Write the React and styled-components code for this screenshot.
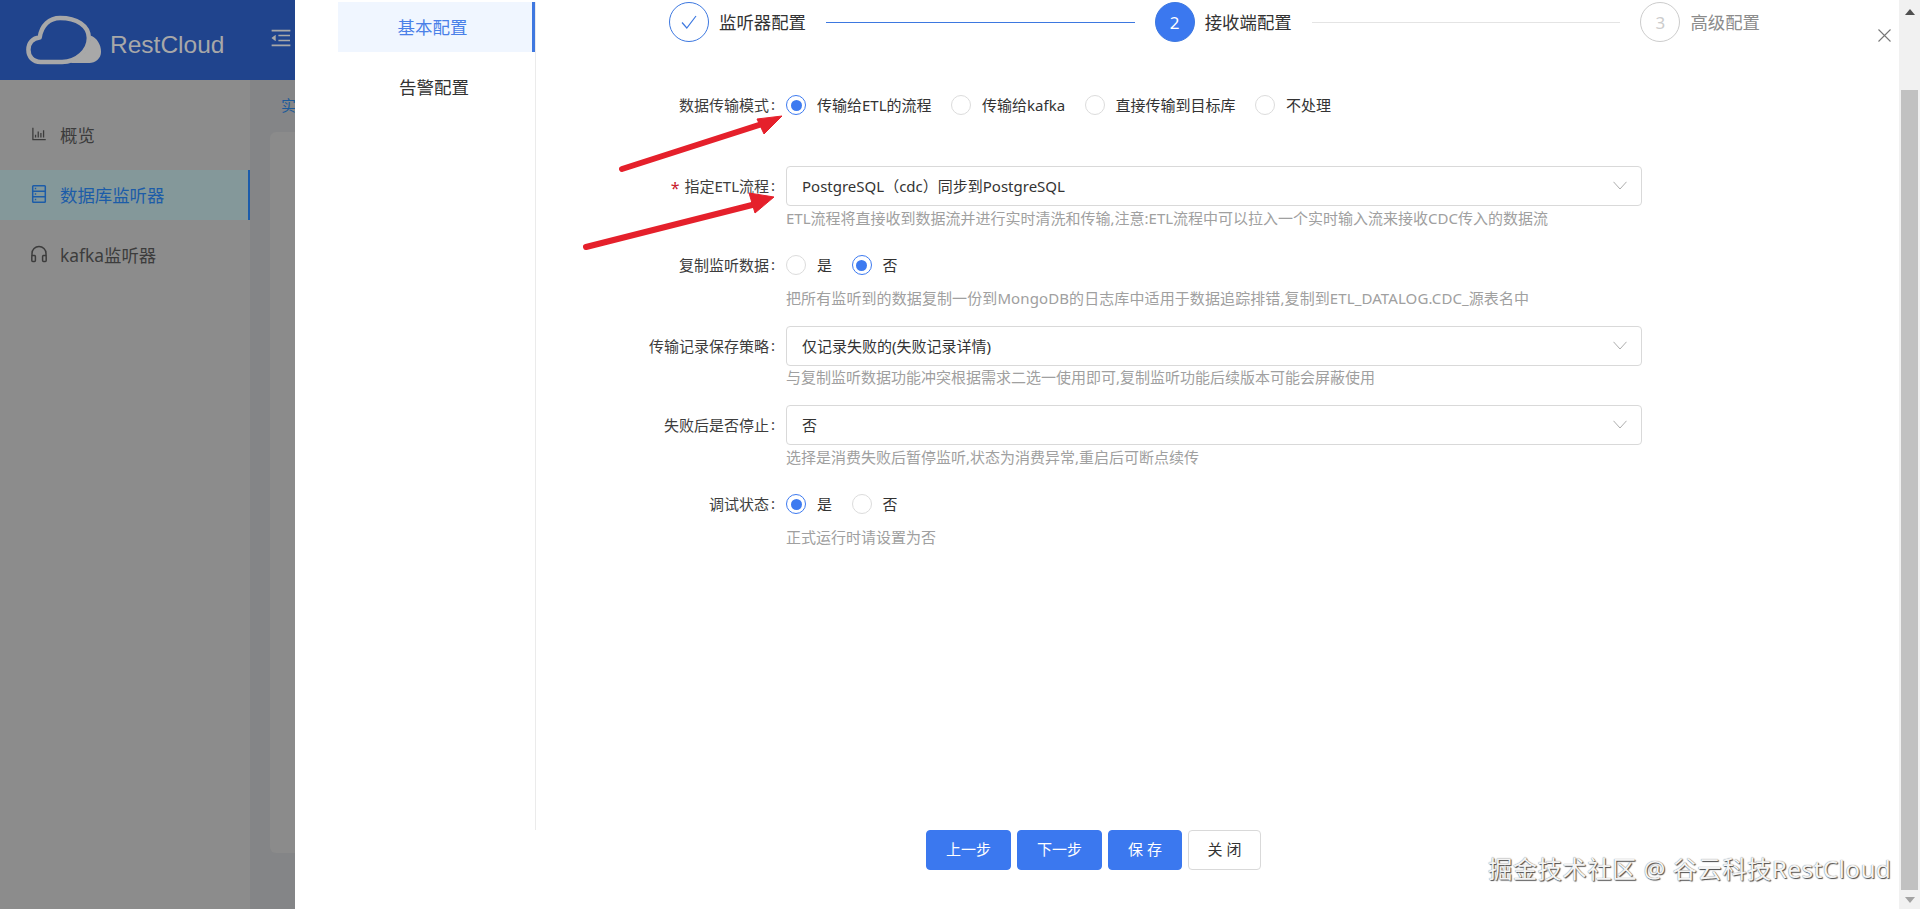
import styled, { createGlobalStyle } from "styled-components";
import { AiOutlineBarChart, AiOutlineMenuFold } from "react-icons/ai";

const GlobalStyle = createGlobalStyle`
  html, body {
    margin: 0;
    padding: 0;
    overflow: hidden;
    font-family: "Noto Sans", "Noto Sans CJK SC", sans-serif;
    color: #333;
  }
  * {
    box-sizing: border-box;
  }
`;

const Page = styled.div`
  position: relative;
  width: 1920px;
  height: 909px;
  overflow: hidden;
  background: #848587;
`;

// dimmed page behind the modal
const Header = styled.div`
  display: flex;
  align-items: center;
  height: 80px;
  padding-left: 25px;
  background: #20448d;
  color: #a8a8a8;
`;
const Brand = styled.span`
  margin-left: 7px;
  font-family: "Liberation Sans", Arial, sans-serif;
  font-size: 24.5px;
  line-height: 1;
  padding-top: 11px;
  width: 159px;
`;
const Toggle = styled.span`
  display: flex;
  margin-top: -4px;
  font-size: 24px;
  color: #a8a8a8;
`;
const Layout = styled.div`
  display: flex;
  height: 829px;
`;
const Sidebar = styled.div`
  display: flex;
  flex-direction: column;
  gap: 10px;
  width: 250px;
  padding-top: 30px;
  background: #8c8c8c;
`;
const SideItem = styled.div`
  display: flex;
  align-items: center;
  gap: 12px;
  height: 50px;
  padding: 0 0 2px 30px;
  font-size: 17.4px;
  color: ${(p) => (p.$active ? "#1c5ca8" : "#3c3c3c")};
  background: ${(p) => (p.$active ? "#84989a" : "transparent")};
  border-right: ${(p) => (p.$active ? "2px solid #1a5cab" : "none")};
  svg {
    flex: none;
    width: 18px;
    height: 18px;
  }
`;
const Content = styled.div`
  flex: 1;
  padding: 15px 20px 0;
`;
const Crumb = styled.div`
  height: 37px;
  padding-left: 11px;
  font-size: 15px;
  line-height: 20px;
  color: #1d5a9a;
`;
const PanelCard = styled.div`
  height: 721px;
  border-radius: 6px;
  background: #8b8b8b;
`;

// modal
const Overlay = styled.div`
  position: absolute;
  inset: 0;
  display: flex;
  padding-left: 295px;
`;
const Modal = styled.div`
  position: relative;
  flex: 1;
  display: flex;
  flex-direction: column;
  padding-top: 2px;
  background: #fff;
`;
const ModalBody = styled.div`
  display: flex;
  height: 828px;
`;
const Tabs = styled.div`
  display: flex;
  flex-direction: column;
  gap: 10px;
  flex: none;
  width: 198px;
  margin-left: 43px;
  border-right: 1px solid #ebebeb;
`;
const Tab = styled.div`
  display: flex;
  align-items: center;
  justify-content: center;
  width: 197px;
  height: 50px;
  padding: 0 5px 2px 0;
  font-size: 17.5px;
  color: ${(p) => (p.$active ? "#4a80e8" : "#333")};
  background: ${(p) => (p.$active ? "#f0f6ff" : "transparent")};
  border-right: ${(p) => (p.$active ? "3px solid #3f78e0" : "none")};
`;
const Main = styled.div`
  flex: 1;
`;
const Stepper = styled.div`
  display: flex;
  align-items: center;
  width: 1091px;
  margin: 0 0 43px 133px;
`;
const StepCircle = styled.span`
  display: flex;
  align-items: center;
  justify-content: center;
  flex: none;
  width: 40px;
  height: 40px;
  border-radius: 50%;
  font-size: 17px;
  color: ${(p) => (p.$state === "active" ? "#fff" : p.$state === "done" ? "#3d78e0" : "#ccc")};
  background: ${(p) => (p.$state === "active" ? "#3b78ef" : "#fff")};
  border: 1px solid ${(p) => (p.$state === "wait" ? "#ccc" : "#3d78e0")};
`;
const StepTitle = styled.span`
  flex: none;
  margin-left: 10px;
  padding-bottom: 2px;
  font-size: 17.4px;
  white-space: nowrap;
  color: ${(p) => (p.$wait ? "#8c8c8c" : "#333")};
`;
const StepLine = styled.span`
  flex: 1;
  height: 1px;
  margin: 0 20px;
  background: ${(p) => (p.$done ? "#3d78e0" : "#e4e4e4")};
`;
const FormRow = styled.div`
  display: grid;
  grid-template-columns: 240px 856px;
  column-gap: 10px;
  align-items: center;
  margin-bottom: ${(p) => p.$after}px;
`;
const Label = styled.label`
  display: flex;
  justify-content: flex-end;
  align-items: center;
  height: 40px;
  padding-bottom: 2px;
  font-size: 15px;
  color: #3d3d3d;
  &::after {
    content: ":";
    margin-left: 2px;
    width: 5px;
  }
`;
const Star = styled.span`
  margin: 5px 5px 0 0;
  font-size: 16px;
  line-height: 1;
  color: #c8202c;
`;
const RadioGroup = styled.div`
  display: flex;
  align-items: center;
  gap: 19.5px;
  height: 40px;
`;
const RadioItem = styled.span`
  display: flex;
  align-items: center;
  gap: 11px;
  font-size: 15px;
  color: #333;
`;
const RadioText = styled.span`
  padding-bottom: 2px;
`;
const RadioDot = styled.span`
  display: flex;
  align-items: center;
  justify-content: center;
  flex: none;
  width: 20px;
  height: 20px;
  border-radius: 50%;
  border: 1px solid ${(p) => (p.$checked ? "#3d7af0" : "#dcdcdc")};
  &::after {
    content: "";
    display: ${(p) => (p.$checked ? "block" : "none")};
    width: 11px;
    height: 11px;
    border-radius: 50%;
    background: #3d7af0;
  }
`;
const SelectBox = styled.div`
  display: flex;
  align-items: center;
  justify-content: space-between;
  height: 40px;
  padding: 0 14px 2px 15px;
  border: 1px solid #d9d9d9;
  border-radius: 4px;
  font-size: 15px;
  color: #333;
`;
const Hint = styled.div`
  grid-column: 2;
  height: 24px;
  margin-top: ${(p) => p.$top}px;
  font-size: 15px;
  line-height: 22px;
  letter-spacing: ${(p) => p.$spread || 0}px;
  white-space: nowrap;
  color: #a0a0a0;
`;
const Footer = styled.div`
  display: flex;
  gap: 6px;
  padding-left: 631px;
`;
const Button = styled.button`
  width: ${(p) => p.$width}px;
  height: 40px;
  padding: 0 0 3px;
  border-radius: 4px;
  font-family: inherit;
  font-size: 15px;
  color: ${(p) => (p.$primary ? "#fff" : "#333")};
  background: ${(p) => (p.$primary ? "#3b78ef" : "#fff")};
  border: 1px solid ${(p) => (p.$primary ? "#3b78ef" : "#d9d9d9")};
`;
const CloseIcon = styled.svg`
  position: absolute;
  top: 29px;
  right: 8px;
  width: 13px;
  height: 13px;
`;

// page scrollbar of the modal wrapper
const ScrollTrack = styled.div`
  display: flex;
  flex-direction: column;
  align-items: center;
  flex: none;
  width: 21px;
  padding-top: 9px;
  background: #f1f1f1;
`;
const ScrollArrow = styled.span`
  width: 0;
  height: 0;
  border-left: 5px solid transparent;
  border-right: 5px solid transparent;
  border-bottom: ${(p) => (p.$down ? "none" : "6px solid #505050")};
  border-top: ${(p) => (p.$down ? "6px solid #a3a3a3" : "none")};
`;
const ScrollThumb = styled.span`
  width: 17px;
  height: 800px;
  margin: 75px 0 7px;
  background: #c1c1c1;
`;

const Arrows = styled.svg`
  position: absolute;
  left: 570px;
  top: 100px;
  width: 220px;
  height: 160px;
`;
const Watermark = styled.div`
  position: absolute;
  left: 1488px;
  top: 852px;
  font-size: 24.4px;
  line-height: 34px;
  letter-spacing: 0.4px;
  white-space: nowrap;
  color: #f4f4f4;
  text-shadow: 1px 1px 1px #4a4a4a, 0 0 1px #6a6a6a;
`;

const Logo = () => (
  <svg width="78" height="52" viewBox="24 14 80 52" fill="none">
    <path
      d="M40 62.5C32 62.5 27.5 57 27.5 50C27.5 43 32 38 39 37.5C41 25 49 17.5 60 17.5C77 17.5 89.5 25 89.5 38C89.5 51 77 62.5 62 62.5Z"
      stroke="#a8a8a8"
      strokeWidth="4.6"
      strokeLinejoin="round"
    />
    <path
      d="M91 35.5C98 38 102 45 102 52C102 59 96 63.5 90 63.5L70 63.5C83 59 92 49 91 35.5Z"
      fill="#a8a8a8"
    />
  </svg>
);

const DatabaseIcon = () => (
  <svg viewBox="0 0 18 18" fill="none" stroke="#1c5ca8" strokeWidth="1.5">
    <rect x="2.7" y="0.8" width="12.6" height="16.4" rx="0.8" />
    <path d="M2.7 6.3H15.3M2.7 11.8H15.3M4.8 3.6H6.2M4.8 9H6.2M4.8 14.5H6.2" />
  </svg>
);

const HeadsetIcon = () => (
  <svg viewBox="0 0 18 18" fill="none" stroke="#3c3c3c" strokeWidth="1.5">
    <path d="M2 11V8.5a7 7 0 0 1 14 0V11" />
    <rect x="1.8" y="10.5" width="3.6" height="6" rx="1" />
    <rect x="12.6" y="10.5" width="3.6" height="6" rx="1" />
  </svg>
);

const CheckIcon = () => (
  <svg width="16" height="14" viewBox="0 0 16 14" fill="none" stroke="#3d78e0" strokeWidth="1.2">
    <path d="M1 7.5L5.8 13L15 1" />
  </svg>
);

const Chevron = () => (
  <svg width="14" height="9" viewBox="0 0 14 9" fill="none" stroke="#adadad" strokeWidth="1">
    <path d="M.5 .8L7 8L13.5 .8" />
  </svg>
);

const Radio = ({ checked, children }) => (
  <RadioItem>
    <RadioDot $checked={checked} />
    <RadioText>{children}</RadioText>
  </RadioItem>
);

const Select = ({ children }) => (
  <SelectBox>
    {children}
    <Chevron />
  </SelectBox>
);

export default function App() {
  return (
    <Page>
      <GlobalStyle />
      <Header>
        <Logo />
        <Brand>RestCloud</Brand>
        <Toggle>
          <AiOutlineMenuFold />
        </Toggle>
      </Header>
      <Layout>
        <Sidebar>
          <SideItem>
            <AiOutlineBarChart color="#3c3c3c" />
            概览
          </SideItem>
          <SideItem $active>
            <DatabaseIcon />
            数据库监听器
          </SideItem>
          <SideItem>
            <HeadsetIcon />
            kafka监听器
          </SideItem>
        </Sidebar>
        <Content>
          <Crumb>实</Crumb>
          <PanelCard />
        </Content>
      </Layout>

      <Overlay>
        <Modal>
          <ModalBody>
            <Tabs>
              <Tab $active>基本配置</Tab>
              <Tab>告警配置</Tab>
            </Tabs>
            <Main>
              <Stepper>
                <StepCircle $state="done">
                  <CheckIcon />
                </StepCircle>
                <StepTitle>监听器配置</StepTitle>
                <StepLine $done />
                <StepCircle $state="active">2</StepCircle>
                <StepTitle>接收端配置</StepTitle>
                <StepLine />
                <StepCircle $state="wait">3</StepCircle>
                <StepTitle $wait>高级配置</StepTitle>
              </Stepper>

              <FormRow $after={41}>
                <Label>数据传输模式</Label>
                <RadioGroup>
                  <Radio checked>传输给ETL的流程</Radio>
                  <Radio>传输给kafka</Radio>
                  <Radio>直接传输到目标库</Radio>
                  <Radio>不处理</Radio>
                </RadioGroup>
              </FormRow>
              <FormRow $after={14}>
                <Label>
                  <Star>*</Star>指定ETL流程
                </Label>
                <Select>PostgreSQL（cdc）同步到PostgreSQL</Select>
                <Hint $top={1}>ETL流程将直接收到数据流并进行实时清洗和传输,注意:ETL流程中可以拉入一个实时输入流来接收CDC传入的数据流</Hint>
              </FormRow>
              <FormRow $after={15}>
                <Label>复制监听数据</Label>
                <RadioGroup>
                  <Radio>是</Radio>
                  <Radio checked>否</Radio>
                </RadioGroup>
                <Hint $top={2} $spread={0.1}>把所有监听到的数据复制一份到MongoDB的日志库中适用于数据追踪排错,复制到ETL_DATALOG.CDC_源表名中</Hint>
              </FormRow>
              <FormRow $after={15}>
                <Label>传输记录保存策略</Label>
                <Select>仅记录失败的(失败记录详情)</Select>
                <Hint $top={0}>与复制监听数据功能冲突根据需求二选一使用即可,复制监听功能后续版本可能会屏蔽使用</Hint>
              </FormRow>
              <FormRow $after={14}>
                <Label>失败后是否停止</Label>
                <Select>否</Select>
                <Hint $top={1}>选择是消费失败后暂停监听,状态为消费异常,重启后可断点续传</Hint>
              </FormRow>
              <FormRow $after={0}>
                <Label>调试状态</Label>
                <RadioGroup>
                  <Radio checked>是</Radio>
                  <Radio>否</Radio>
                </RadioGroup>
                <Hint $top={2}>正式运行时请设置为否</Hint>
              </FormRow>
            </Main>
          </ModalBody>
          <Footer>
            <Button $primary $width={85}>上一步</Button>
            <Button $primary $width={85}>下一步</Button>
            <Button $primary $width={74}>保 存</Button>
            <Button $width={73}>关 闭</Button>
          </Footer>
          <CloseIcon viewBox="0 0 13 13" fill="none" stroke="#777" strokeWidth="1.1">
            <path d="M.5 .5L12.5 12.5M12.5 .5L.5 12.5" />
          </CloseIcon>
        </Modal>
        <ScrollTrack>
          <ScrollArrow />
          <ScrollThumb />
          <ScrollArrow $down />
        </ScrollTrack>
      </Overlay>

      <Arrows viewBox="570 100 220 160">
        <path d="M622 169L768 122" stroke="#e5202b" strokeWidth="6" strokeLinecap="round" />
        <path d="M782 116L757 119L764 134Z" fill="#e5202b" stroke="#e5202b" strokeLinejoin="round" />
        <path d="M586 247L760 203" stroke="#e5202b" strokeWidth="6" strokeLinecap="round" />
        <path d="M774 197L749 193L755 213Z" fill="#e5202b" stroke="#e5202b" strokeLinejoin="round" />
      </Arrows>
      <Watermark>掘金技术社区 @ 谷云科技RestCloud</Watermark>
    </Page>
  );
}
